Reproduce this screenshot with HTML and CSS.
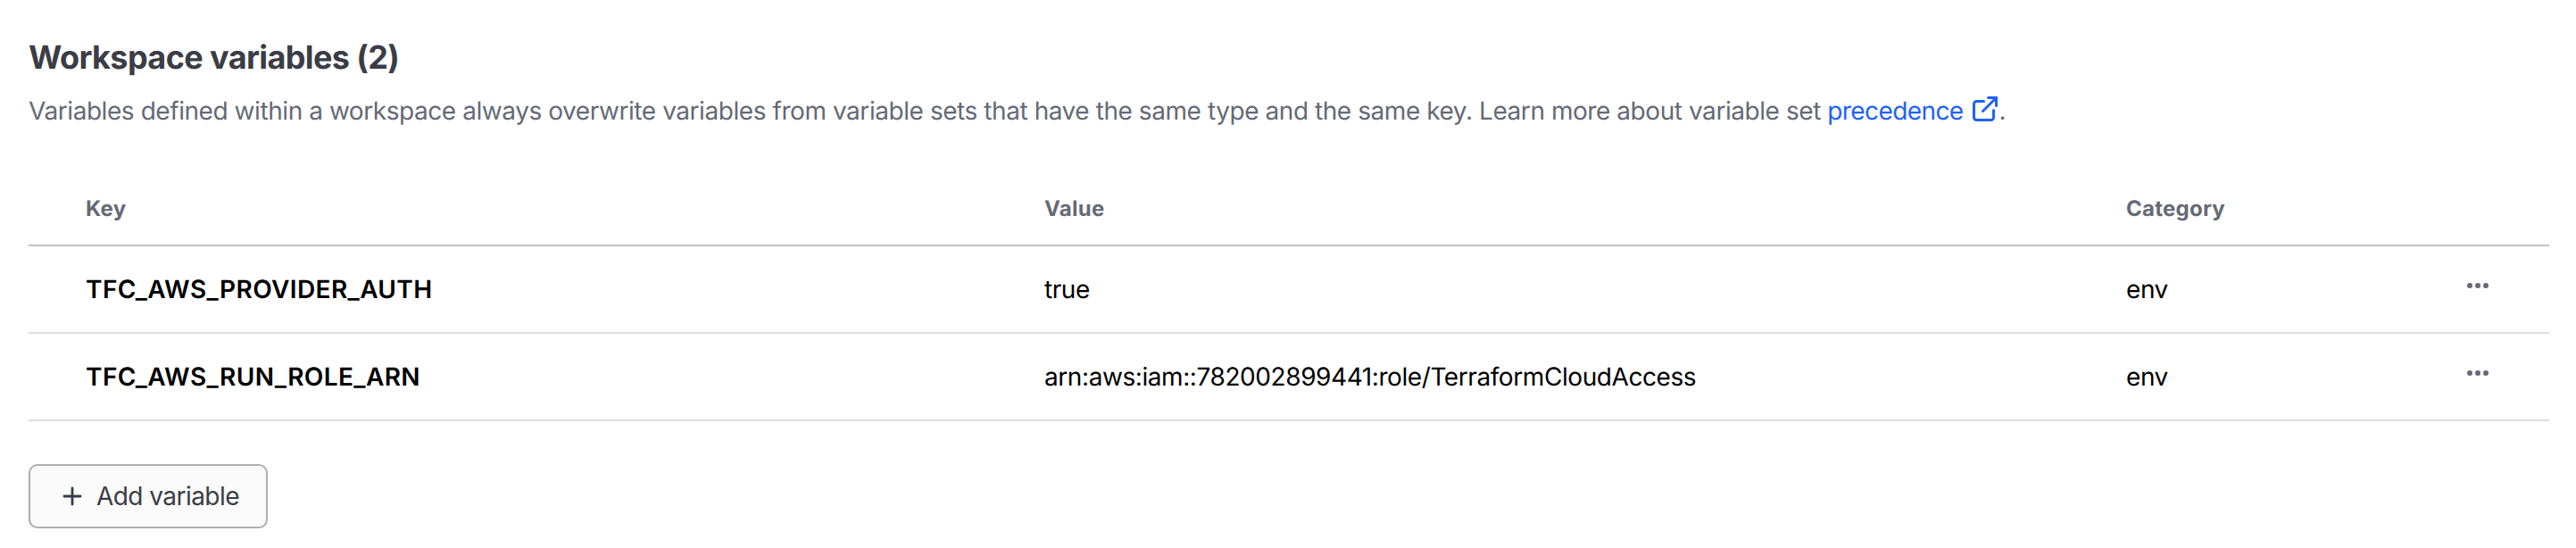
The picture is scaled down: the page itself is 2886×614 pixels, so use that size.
FILE: index.html
```html
<!DOCTYPE html>
<html lang="en">
<head>
<meta charset="utf-8">
<title>Workspace variables</title>
<link rel="stylesheet" href="styles.css">
</head>
<body>
<main class="panel">
  <h2 class="title"><span>Workspace variables (2)</span></h2>
  <p class="description"><span>Variables defined within a workspace always overwrite variables from variable sets that have the same type and the same key. Learn more about variable set</span> <a class="link" href="#">precedence<svg class="external" viewBox="0 0 28 28"><path d="M12.5 5.5H4.5a3 3 0 0 0-3 3v15a3 3 0 0 0 3 3h16a3 3 0 0 0 3-3v-8M17.5 1.5h9v9M11.5 16.5l15-15"/></svg></a>.</p>
  <div class="table">
    <div class="row head"><span>Key</span><span>Value</span><span>Category</span><span></span></div>
    <div class="row"><strong class="key">TFC_AWS_PROVIDER_AUTH</strong><span class="value">true</span><span class="value">env</span><svg class="more" viewBox="0 0 26 8"><circle cx="4" cy="4" r="3"/><circle cx="13" cy="4" r="3"/><circle cx="22" cy="4" r="3"/></svg></div>
    <div class="row"><strong class="key">TFC_AWS_RUN_ROLE_ARN</strong><span class="value">arn:aws:iam::782002899441:role/TerraformCloudAccess</span><span class="value">env</span><svg class="more" viewBox="0 0 26 8"><circle cx="4" cy="4" r="3"/><circle cx="13" cy="4" r="3"/><circle cx="22" cy="4" r="3"/></svg></div>
  </div>
  <button class="add"><svg class="plus" viewBox="0 0 22 22"><path d="M11 2v18M2 11h18"/></svg><span>Add variable</span></button>
</main>
</body>
</html>
```
FILE: styles.css
```css
* { box-sizing: border-box; }
body { margin: 0; background: #fff; color: #000; font-family: Inter, sans-serif; text-rendering: geometricPrecision; }
.panel { padding: 40px 30px 0 32px; }
.title { margin: 0; font-size: 36px; line-height: 48px; font-weight: 650; letter-spacing: -0.6px; color: #3b3d45; }
.description { margin: 15px 0 0; font-size: 28px; line-height: 42px; letter-spacing: -0.438px; color: #656a76; white-space: nowrap; }
.link { color: #1f62fa; text-decoration: none; letter-spacing: -0.6px; }
.external { width: 28px; height: 28px; margin: 0 2px 0 10px; vertical-align: -2px; fill: none; stroke: currentColor; stroke-width: 3; stroke-linecap: round; stroke-linejoin: miter; }
.table { margin-top: 47px; }
.row { display: grid; grid-template-columns: 1074px 1212px 381px 1fr; align-items: center; height: 98px; padding-left: 64px; border-bottom: 2px solid #dedee3; font-size: 28px; }
.head { height: 84px; padding-top: 1px; border-color: #c2c2c8; font-size: 24px; font-weight: 650; letter-spacing: 0.25px; color: #656a76; }
.key { font-weight: 600; letter-spacing: 0.4px; }
.value { letter-spacing: -0.42px; }
.more { width: 26px; height: 8px; margin-bottom: 8px; fill: #656a76; }
.add { display: flex; align-items: center; gap: 16px; width: 268px; height: 72px; margin-top: 48px; padding: 0 36px; border: 2px solid #aeafb2; border-radius: 10px; background: #fafafa; box-shadow: 0 2px 2px #656a7618; color: #3b3d45; font: 28px Inter, sans-serif; letter-spacing: -0.55px; white-space: nowrap; }
.plus { width: 22px; height: 22px; flex: none; fill: none; stroke: currentColor; stroke-width: 2.8; stroke-linecap: round; }
```
